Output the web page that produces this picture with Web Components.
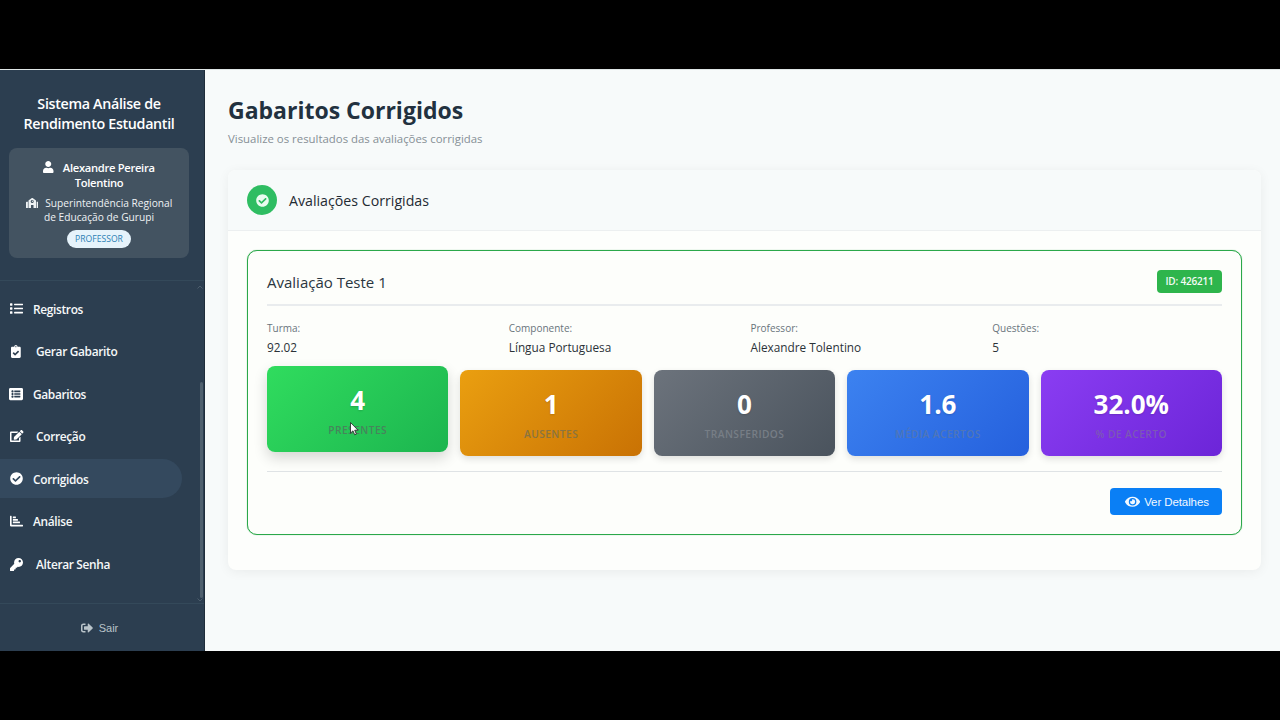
<!DOCTYPE html>
<html lang="pt-BR"><head><meta charset="utf-8"><title>Gabaritos Corrigidos</title>
<style>
html,body{margin:0;height:720px;overflow:hidden;background:#000;font-family:"Open Sans","Noto Sans",sans-serif}
</style></head><body>
<app-shell>
  <app-sidebar slot="side">
    <nav-item icon="list">Registros</nav-item>
    <nav-item icon="clip" wide size="13" shift="1">Gerar Gabarito</nav-item>
    <nav-item icon="listalt" size="14" shift="-1">Gabaritos</nav-item>
    <nav-item icon="edit" wide size="12">Correção</nav-item>
    <nav-item icon="check" active>Corrigidos</nav-item>
    <nav-item icon="chart">Análise</nav-item>
    <nav-item icon="key" wide>Alterar Senha</nav-item>
  </app-sidebar>
  <page-main slot="main">
    <eval-card title="Avaliação Teste 1" code="ID: 426211">
      <info-field slot="info" label="Turma:">92.02</info-field>
      <info-field slot="info" label="Componente:">Língua Portuguesa</info-field>
      <info-field slot="info" label="Professor:">Alexandre Tolentino</info-field>
      <info-field slot="info" label="Questões:">5</info-field>
      <stat-card slot="stats" value="4" label="Presentes" tone="green" raised></stat-card>
      <stat-card slot="stats" value="1" label="Ausentes" tone="orange"></stat-card>
      <stat-card slot="stats" value="0" label="Transferidos" tone="gray"></stat-card>
      <stat-card slot="stats" value="1.6" label="Média Acertos" tone="blue"></stat-card>
      <stat-card slot="stats" value="32.0%" label="% de Acerto" tone="purple"></stat-card>
    </eval-card>
  </page-main>
</app-shell>
<script>
const ICONS={
user:[448,'M224 256c70.7 0 128-57.3 128-128S294.7 0 224 0 96 57.3 96 128s57.3 128 128 128zm89.6 32h-16.7c-22.2 10.2-46.9 16-72.9 16s-50.6-5.8-72.9-16h-16.7C60.2 288 0 348.2 0 422.4V464c0 26.5 21.5 48 48 48h352c26.5 0 48-21.5 48-48v-41.6c0-74.2-60.2-134.4-134.4-134.4z'],
check:[512,'M504 256c0 136.967-111.033 248-248 248S8 392.967 8 256 119.033 8 256 8s248 111.033 248 248zM227.314 387.314l184-184c6.248-6.248 6.248-16.379 0-22.627l-22.627-22.627c-6.248-6.249-16.379-6.249-22.628 0L216 308.118l-70.059-70.059c-6.248-6.248-16.379-6.248-22.628 0l-22.627 22.627c-6.248 6.248-6.248 16.379 0 22.627l104 104c6.249 6.249 16.379 6.249 22.628.001z'],
list:[512,'M80 368H16a16 16 0 0 0-16 16v64a16 16 0 0 0 16 16h64a16 16 0 0 0 16-16v-64a16 16 0 0 0-16-16zm0-320H16A16 16 0 0 0 0 64v64a16 16 0 0 0 16 16h64a16 16 0 0 0 16-16V64a16 16 0 0 0-16-16zm0 160H16a16 16 0 0 0-16 16v64a16 16 0 0 0 16 16h64a16 16 0 0 0 16-16v-64a16 16 0 0 0-16-16zm416 176H176a16 16 0 0 0-16 16v32a16 16 0 0 0 16 16h320a16 16 0 0 0 16-16v-32a16 16 0 0 0-16-16zm0-320H176a16 16 0 0 0-16 16v32a16 16 0 0 0 16 16h320a16 16 0 0 0 16-16V80a16 16 0 0 0-16-16zm0 160H176a16 16 0 0 0-16 16v32a16 16 0 0 0 16 16h320a16 16 0 0 0 16-16v-32a16 16 0 0 0-16-16z'],
clip:[384,'M336 64h-80c0-35.3-28.7-64-64-64s-64 28.7-64 64H48C21.5 64 0 85.5 0 112v352c0 26.5 21.5 48 48 48h288c26.5 0 48-21.5 48-48V112c0-26.5-21.5-48-48-48zM192 40c13.3 0 24 10.7 24 24s-10.7 24-24 24-24-10.7-24-24 10.7-24 24-24zm121.2 231.8l-143 141.8c-4.7 4.7-12.3 4.6-17-.1l-82.6-83.3c-4.7-4.7-4.6-12.3.1-17L99.1 285c4.7-4.7 12.3-4.6 17 .1l46 46.4 106-105.2c4.7-4.7 12.3-4.6 17 .1l28.2 28.4c4.7 4.8 4.6 12.3-.1 17z'],
listalt:[512,'M464 480H48c-26.51 0-48-21.49-48-48V80c0-26.51 21.49-48 48-48h416c26.51 0 48 21.49 48 48v352c0 26.51-21.49 48-48 48zM128 120c-22.091 0-40 17.909-40 40s17.909 40 40 40 40-17.909 40-40-17.909-40-40-40zm0 96c-22.091 0-40 17.909-40 40s17.909 40 40 40 40-17.909 40-40-17.909-40-40-40zm0 96c-22.091 0-40 17.909-40 40s17.909 40 40 40 40-17.909 40-40-17.909-40-40-40zm288-136v-32c0-6.627-5.373-12-12-12H204c-6.627 0-12 5.373-12 12v32c0 6.627 5.373 12 12 12h200c6.627 0 12-5.373 12-12zm0 96v-32c0-6.627-5.373-12-12-12H204c-6.627 0-12 5.373-12 12v32c0 6.627 5.373 12 12 12h200c6.627 0 12-5.373 12-12zm0 96v-32c0-6.627-5.373-12-12-12H204c-6.627 0-12 5.373-12 12v32c0 6.627 5.373 12 12 12h200c6.627 0 12-5.373 12-12z'],
edit:[576,'M402.6 83.2l90.2 90.2c3.8 3.8 3.8 10 0 13.8L274.4 405.6l-92.8 10.3c-12.4 1.4-22.9-9.1-21.5-21.5l10.3-92.8L388.8 83.2c3.8-3.8 10-3.8 13.8 0zm162-22.9l-48.8-48.8c-15.2-15.2-39.9-15.2-55.2 0l-35.4 35.4c-3.8 3.8-3.8 10 0 13.8l90.2 90.2c3.8 3.8 10 3.8 13.8 0l35.4-35.4c15.2-15.3 15.2-40 0-55.2zM384 346.2V448H64V128h229.8c3.2 0 6.2-1.3 8.5-3.5l40-40c7.6-7.6 2.2-20.5-8.5-20.5H48C21.5 64 0 85.5 0 112v352c0 26.5 21.5 48 48 48h352c26.5 0 48-21.5 48-48V306.2c0-10.7-12.9-16-20.5-8.5l-40 40c-2.2 2.3-3.5 5.3-3.5 8.5z'],
chart:[512,'M0 48a16 16 0 0 1 16-16h32a16 16 0 0 1 16 16v336h432a16 16 0 0 1 16 16v32a16 16 0 0 1-16 16H32a32 32 0 0 1-32-32zM112 72a12 12 0 0 1 12-12h96a12 12 0 0 1 12 12v48a12 12 0 0 1-12 12h-96a12 12 0 0 1-12-12zm0 96a12 12 0 0 1 12-12h176a12 12 0 0 1 12 12v48a12 12 0 0 1-12 12H124a12 12 0 0 1-12-12zm0 96a12 12 0 0 1 12-12h256a12 12 0 0 1 12 12v48a12 12 0 0 1-12 12H124a12 12 0 0 1-12-12z'],
key:[512,'M512 176.001C512 273.203 433.202 352 336 352c-11.22 0-22.19-1.062-32.827-3.069l-24.012 27.014A23.999 23.999 0 0 1 261.223 384H224v40c0 13.255-10.745 24-24 24h-40v40c0 13.255-10.745 24-24 24H24c-13.255 0-24-10.745-24-24v-78.059c0-6.365 2.529-12.47 7.029-16.971l161.802-161.802C163.108 213.814 160 195.271 160 176 160 78.798 238.797.001 335.999 0 433.488-.001 512 78.511 512 176.001zM336 128c0 26.51 21.49 48 48 48s48-21.49 48-48-21.49-48-48-48-48 21.49-48 48z'],
out:[512,'M497 273L329 441c-15 15-41 4.5-41-17v-96H152c-13.3 0-24-10.7-24-24v-96c0-13.3 10.7-24 24-24h136V88c0-21.4 25.9-32 41-17l168 168c9.3 9.4 9.3 24.6 0 34zM192 436v-40c0-6.6-5.4-12-12-12H96c-17.7 0-32-14.3-32-32V160c0-17.7 14.3-32 32-32h84c6.6 0 12-5.4 12-12V76c0-6.6-5.4-12-12-12H96c-53 0-96 43-96 96v192c0 53 43 96 96 96h84c6.6 0 12-5.4 12-12z'],
eye:[576,'M572.52 241.4C518.29 135.59 410.93 64 288 64S57.68 135.64 3.48 241.41a32.35 32.35 0 0 0 0 29.19C57.71 376.41 165.07 448 288 448s230.32-71.64 284.52-177.41a32.35 32.35 0 0 0 0-29.19zM288 400a144 144 0 1 1 144-144 143.93 143.93 0 0 1-144 144zm0-240a95.31 95.31 0 0 0-25.31 3.79 47.85 47.85 0 0 1-66.9 66.9A95.78 95.78 0 1 0 288 160z'],
school:[640,'M0 224v272c0 8.84 7.16 16 16 16h80V192H32c-17.67 0-32 14.33-32 32zm360-48h-24v-40c0-4.42-3.58-8-8-8h-16c-4.42 0-8 3.58-8 8v64c0 4.42 3.58 8 8 8h48c4.42 0 8-3.58 8-8v-16c0-4.42-3.58-8-8-8zm137.75-63.96l-160-106.67a32.02 32.02 0 0 0-35.5 0l-160 106.67A32.002 32.002 0 0 0 128 138.66V512h128V368c0-8.84 7.16-16 16-16h96c8.84 0 16 7.16 16 16v144h128V138.67c0-10.7-5.35-20.7-14.25-26.63zM320 256c-44.18 0-80-35.82-80-80s35.82-80 80-80 80 35.82 80 80-35.82 80-80 80zm288-64h-64v320h80c8.84 0 16-7.16 16-16V224c0-17.67-14.33-32-32-32z']
};
function svgIcon(n,h){const [w,d]=ICONS[n];return `<svg xmlns="http://www.w3.org/2000/svg" viewBox="0 0 ${w} 512" height="${h}" width="${h*w/512}" fill="currentColor" style="display:block;flex:none"><path fill-rule="evenodd" d="${d}"/></svg>`}
class Base extends HTMLElement{
  constructor(){super();this.attachShadow({mode:'open'})}
  connectedCallback(){this.shadowRoot.innerHTML=this.render()}
}
customElements.define('app-shell',class extends Base{render(){return `<style>
:host{display:block;height:720px;box-sizing:border-box;padding:69px 0;position:relative}
.row{display:flex;height:582px;background:#f7fafa;border-top:1px solid #dfe6e6;box-sizing:border-box}
svg.cur{position:absolute;left:350px;top:422px}
</style><div class="row"><slot name="side"></slot><slot name="main"></slot></div>
<svg class="cur" width="9" height="14" viewBox="0 0 9 14"><path d="M.5.5v10.6l2.5-2.3 1.7 4 1.7-.7-1.7-3.9h3.3z" fill="#fff" stroke="#222" stroke-width=".8"/></svg>`}});
customElements.define('app-sidebar',class extends Base{render(){return `<style>
:host{display:flex;flex-direction:column;width:205px;flex:none;background:#2c3e50;color:#fff;position:relative;box-sizing:border-box;border-right:1px solid #1f2d3a}
header{padding:24px 15px 21px 9px;border-bottom:1px solid #34495a;height:211px;box-sizing:border-box}
h1{margin:0 0 14px;font-size:14.3px;line-height:20px;font-weight:600;text-align:center;letter-spacing:-.33px}
.box{background:#435361;border-radius:8px;height:110px;box-sizing:border-box;padding:12px 8px 0;text-align:center}
.name{font-size:11.2px;line-height:15px;font-weight:600;letter-spacing:-.3px;padding:0 12px}
.name svg,.org svg{display:inline-block!important;vertical-align:-1px}
.name svg{margin-right:9px;vertical-align:-1px}
.org{font-size:10.2px;line-height:14px;font-weight:500;margin-top:6px;padding:0 5px;color:#eef2f4}
.org svg{margin-right:7px}
.badge{display:inline-block;margin-top:6px;height:18px;line-height:18px;width:64px;border-radius:9px;background:#e6f3fb;color:#2a7fb5;font-size:8.6px;font-weight:500}
nav{height:322px;box-sizing:border-box;padding:8px 22px 0 0;display:flex;flex-direction:column;gap:3.6px}
.scroll{position:absolute;left:200px;top:312px;width:3px;height:216px;background:#4f606e;border-radius:2px}
.arr{position:absolute;left:197px;width:6px;height:4px;color:#4c5d6c}
footer{height:48px;border-top:1px solid #34495a;box-sizing:border-box;display:flex;align-items:center;justify-content:center;gap:6px;padding:1px 15px 1px 10px;color:#b9c3c9;font:11px "Liberation Sans",sans-serif}
</style>
<header><h1>Sistema Análise de Rendimento Estudantil</h1>
<div class="box"><div class="name">${svgIcon('user',12)}Alexandre Pereira Tolentino</div>
<div class="org">${svgIcon('school',10)}Superintendência Regional de Educação de Gurupi</div>
<span class="badge">PROFESSOR</span></div></header>
<nav><slot></slot></nav>
<div class="scroll"></div>
<svg class="arr" style="top:215px" viewBox="0 0 6 4"><path d="M.5 3.5 3 1l2.5 2.5" fill="none" stroke="currentColor"/></svg>
<svg class="arr" style="top:528px" viewBox="0 0 6 4"><path d="M.5.5 3 3 5.5.5" fill="none" stroke="currentColor"/></svg>
<footer>${svgIcon('out',12)}<span>Sair</span></footer>`}});
customElements.define('nav-item',class extends Base{render(){const w=this.hasAttribute('wide')?26:23;const s=+(this.getAttribute('size')||13);const x=+(this.getAttribute('shift')||0);return `<style>
:host{display:flex;align-items:center;height:39px;padding-left:10px;border-radius:0 20px 20px 0;font-size:11.9px;font-weight:600;letter-spacing:-.33px;color:#f6f8f9}
:host([active]){background:#34495e}
.i{width:${w}px;flex:none;color:#fff}
.i svg{transform:translateX(${x}px)}
</style><span class="i">${svgIcon(this.getAttribute('icon'),s)}</span><slot></slot>`}});
customElements.define('page-main',class extends Base{render(){return `<style>
:host{display:block;flex:1;min-width:0;padding:24px 19px 0 23px;box-sizing:border-box}
h2{margin:0;font-size:23px;line-height:32px;font-weight:700;color:#22313f}
p{margin:4px 0 0;font-size:11.4px;line-height:18px;color:#868f96}
.card{margin-top:22px;height:400px;background:#fdfefc;border-radius:8px;box-shadow:0 2px 12px rgba(0,0,0,.06);overflow:hidden}
.head{height:61px;box-sizing:border-box;background:#f7fafa;border-bottom:1px solid #eceff0;display:flex;align-items:center;padding:0 19px;gap:12px;font-size:14.2px;font-weight:500;color:#1f2a33}
.dot{width:30px;height:30px;border-radius:50%;background:#2fbd62;color:#eafbf0;display:flex;align-items:center;justify-content:center}
.body{padding:19px 19px 0}
</style><h2>Gabaritos Corrigidos</h2><p>Visualize os resultados das avaliações corrigidas</p>
<div class="card"><div class="head"><span class="dot">${svgIcon('check',13)}</span>Avaliações Corrigidas</div><div class="body"><slot></slot></div></div>`}});
customElements.define('eval-card',class extends Base{render(){return `<style>
:host{display:block;height:285px;box-sizing:border-box;border:1px solid #2ba84a;box-shadow:0 0 1px rgba(40,167,69,.75);border-radius:10px;padding:18px 19px 0;background:#fdfefb}
.top{display:flex;justify-content:space-between;align-items:center;height:35px;border-bottom:2px solid #e9ecee}
h3{margin:-10px 0 0;font-size:15px;font-weight:500;color:#2a3640;line-height:22px}
.id{margin-top:-11px;background:#2eb54c;color:#f3fbf5;border-radius:4px;height:23px;line-height:23px;width:65px;text-align:center;font-size:10px;font-weight:600;letter-spacing:-.2px}
.info{display:grid;grid-template-columns:repeat(4,1fr);gap:12px;margin-top:15px}
.stats{display:grid;grid-template-columns:repeat(5,1fr);gap:12px;margin-top:14px}
hr{border:0;border-top:1px solid #dfe3e5;margin:15px 0 16px}
.act{display:flex;justify-content:flex-end}
button{display:flex;align-items:center;gap:4px;border:0;width:112px;height:27px;padding:0 0 0 15px;border-radius:4px;background:#0a7ff5;color:#f1f8ff;font:11.5px "Liberation Sans",sans-serif;letter-spacing:-.1px}
</style><div class="top"><h3>${this.getAttribute('title')}</h3><span class="id">${this.getAttribute('code')}</span></div>
<div class="info"><slot name="info"></slot></div>
<div class="stats"><slot name="stats"></slot></div><hr>
<div class="act"><button>${svgIcon('eye',13.5)}Ver Detalhes</button></div>`}});
customElements.define('info-field',class extends Base{render(){return `<style>
:host{display:block}
.l{font-size:10px;line-height:14px;color:#69747c;font-weight:500}
.v{font-size:11.8px;line-height:17px;margin-top:4px;color:#2b3238;font-weight:500}
</style><div class="l">${this.getAttribute('label')}</div><div class="v"><slot></slot></div>`}});
const TONES={green:['#30dc5e','#1cb54f','#47845c'],orange:['#ea9f10','#c97204','#8a7440'],gray:['#6c737c','#4a535d','#777e86'],blue:['#3c82f0','#2560dd','#4f76b8'],purple:['#8a3df2','#6c25d8','#7c58b6']};
customElements.define('stat-card',class extends Base{render(){const t=TONES[this.getAttribute('tone')];return `<style>
:host{display:flex;flex-direction:column;align-items:center;height:86px;box-sizing:border-box;padding-top:16px;border-radius:8px;background:linear-gradient(135deg,${t[0]},${t[1]});box-shadow:0 3px 7px rgba(0,0,0,.12)}
:host([raised]){transform:translateY(-4px);box-shadow:0 6px 14px rgba(0,0,0,.16)}
.n{font-size:26px;line-height:37px;font-weight:700;color:#fff;text-shadow:0 1px 2px rgba(0,0,0,.15)}
.t{font-size:10.2px;line-height:14px;margin-top:4px;font-weight:600;letter-spacing:.45px;text-transform:uppercase;color:${t[2]}}
</style><div class="n">${this.getAttribute('value')}</div><div class="t">${this.getAttribute('label')}</div>`}});
</script>
</body></html>
